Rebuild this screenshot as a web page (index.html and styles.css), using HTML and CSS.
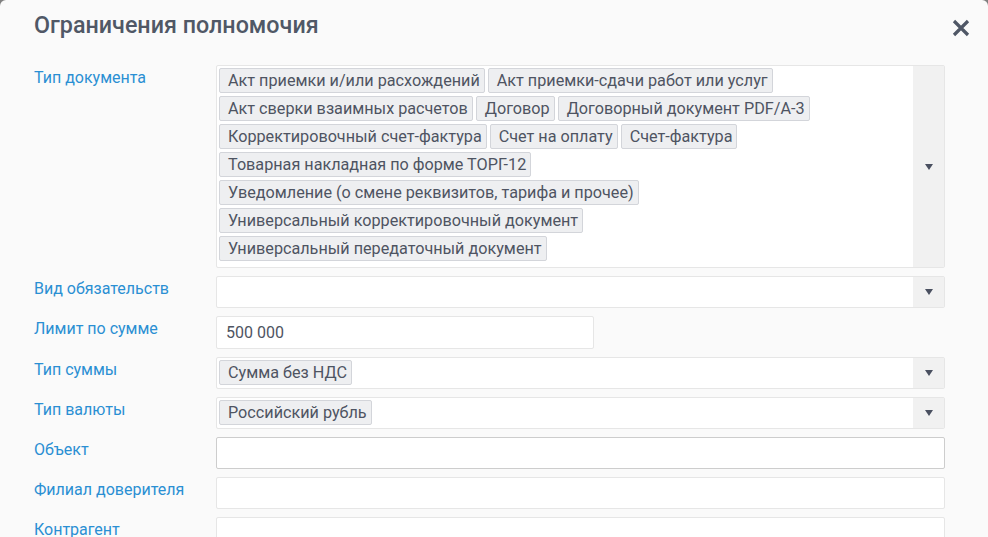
FILE: index.html
```html
<!DOCTYPE html>
<html lang="ru">
<head>
  <meta charset="UTF-8">
  <meta name="viewport" content="width=device-width, initial-scale=1.0">
  <title>Ограничения полномочия</title>
  <link rel="stylesheet" href="styles.css">
</head>
<body>
  <div class="modal">
    <div class="modal-header">
      <h2>Ограничения полномочия</h2>
      <button class="close" type="button" aria-label="Закрыть">
        <svg width="18" height="18" viewBox="0 0 18 18">
          <path d="M2 2 L16 16 M16 2 L2 16" stroke="#4f5766" stroke-width="3.2" stroke-linecap="butt"/>
        </svg>
      </button>
    </div>

    <form class="limits">
      <label class="field-label">Тип документа</label>
      <div class="select">
        <div class="tags multi">
          <span class="tag">Акт приемки и/или расхождений</span>
          <span class="tag">Акт приемки-сдачи работ или услуг</span>
          <span class="tag">Акт сверки взаимных расчетов</span>
          <span class="tag">Договор</span>
          <span class="tag">Договорный документ PDF/A-3</span>
          <span class="tag">Корректировочный счет-фактура</span>
          <span class="tag">Счет на оплату</span>
          <span class="tag">Счет-фактура</span>
          <span class="tag">Товарная накладная по форме ТОРГ-12</span>
          <span class="tag">Уведомление (о смене реквизитов, тарифа и прочее)</span>
          <span class="tag">Универсальный корректировочный документ</span>
          <span class="tag">Универсальный передаточный документ</span>
        </div>
        <div class="arrow"></div>
      </div>

      <label class="field-label">Вид обязательств</label>
      <div class="select">
        <div class="tags"></div>
        <div class="arrow"></div>
      </div>

      <label class="field-label">Лимит по сумме</label>
      <div><input class="input short" type="text" value="500 000"></div>

      <label class="field-label">Тип суммы</label>
      <div class="select">
        <div class="tags"><span class="tag">Сумма без НДС</span></div>
        <div class="arrow"></div>
      </div>

      <label class="field-label">Тип валюты</label>
      <div class="select">
        <div class="tags"><span class="tag">Российский рубль</span></div>
        <div class="arrow"></div>
      </div>

      <label class="field-label">Объект</label>
      <input class="input active" type="text">

      <label class="field-label">Филиал доверителя</label>
      <input class="input" type="text">

      <label class="field-label">Контрагент</label>
      <input class="input" type="text">
    </form>
  </div>
</body>
</html>
```

FILE: styles.css
```css
body {
  margin: 0;
  background: #808080;
  font-family: Roboto, "Noto Sans", sans-serif;
  overflow: hidden;
}

.modal {
  background: #fafafa;
  border-radius: 6px 6px 0 0;
  min-height: 600px;
  padding: 0 18px 0 34px;
}

.modal-header {
  display: flex;
  justify-content: space-between;
  align-items: flex-start;
  padding-top: 12px;
  height: 53px;
}

.modal-header h2 {
  margin: 0;
  font-size: 23.3px;
  line-height: 26px;
  font-weight: 500;
  color: #505866;
}

.close {
  background: none;
  border: none;
  padding: 0;
  margin-top: 7px;
  cursor: pointer;
}

.limits {
  display: grid;
  grid-template-columns: 182px 729px;
  row-gap: 8px;
}

.field-label {
  color: #2a8fd3;
  font-size: 16px;
  line-height: 20px;
  padding-top: 3px;
}

.select {
  display: flex;
  background: #fff;
  border: 1px solid #e6e6e6;
  border-radius: 2px;
  min-height: 30px;
}

.tags {
  flex: 1;
  display: flex;
  flex-wrap: wrap;
  align-content: flex-start;
  gap: 3px;
  padding: 2px 3px 3px 2px;
}

.tags.multi {
  padding-bottom: 6px;
}

.tags:empty {
  padding: 0;
}

.tag {
  background: #eeeff1;
  border: 1px solid #d3d5da;
  border-radius: 2px;
  color: #4e5462;
  font-size: 16.2px;
  line-height: 23px;
  padding: 0 4px 0 8px;
  white-space: nowrap;
}

.arrow {
  width: 31px;
  background: #f1f1f1;
  display: flex;
  align-items: center;
  justify-content: center;
}

.arrow::after {
  content: "";
  border-left: 4px solid transparent;
  border-right: 4px solid transparent;
  border-top: 6px solid #4a5060;
}

.input {
  box-sizing: border-box;
  width: 729px;
  height: 32px;
  background: #fff;
  border: 1px solid #e6e6e6;
  border-radius: 2px;
  padding: 0 9px;
  font-family: inherit;
  font-size: 16px;
  color: #4e5462;
  outline: none;
}

.input.short {
  width: 378px;
  height: 33px;
}

.input.active {
  border-color: #cdcdcd;
}
```
